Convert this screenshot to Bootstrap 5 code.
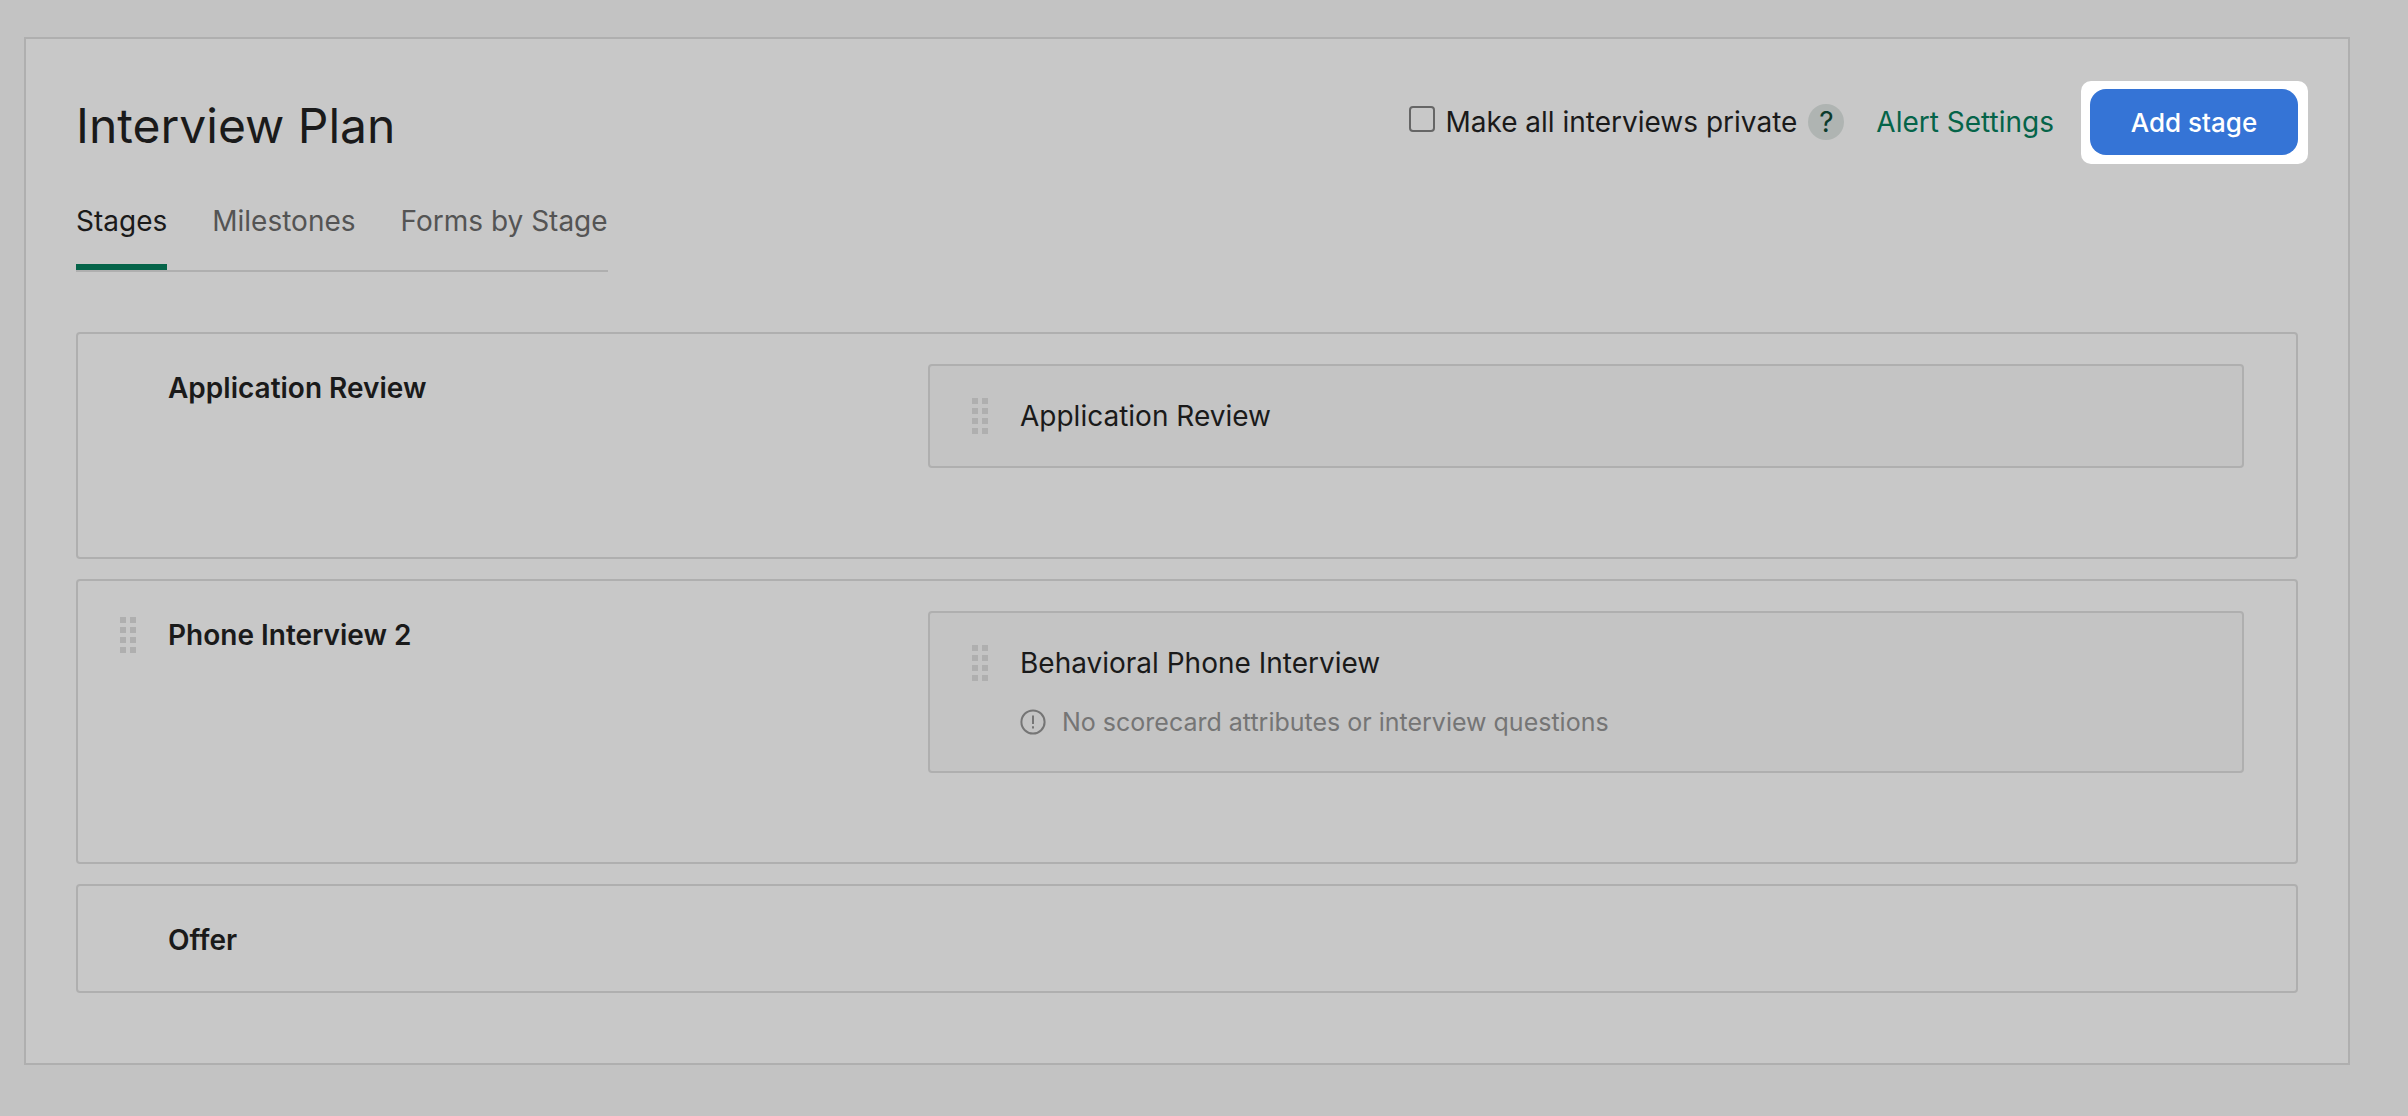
<!DOCTYPE html>
<html lang="en">
<head>
<meta charset="utf-8">
<meta name="viewport" content="width=device-width, initial-scale=1">
<title>Interview Plan</title>
<link href="https://cdn.jsdelivr.net/npm/bootstrap@5.3.0/dist/css/bootstrap.min.css" rel="stylesheet">
<style>
  :root { --line: #afafaf; --ink: #1a1a1a; --green: #056449; }
  body { background: #c3c3c3; color: var(--ink); font: 400 28px/40px Inter, "Liberation Sans", sans-serif; }
  .plan { margin: 37px 58px 0 24px; padding: 50px 50px 70px; background: #c8c8c8; border: 2px solid var(--line); }
  .plan-title { font-size: 48px; line-height: 74px; font-weight: 400; }
  .plan-actions { height: 66px; }
  .form-check-input.private-check { width: 26px; height: 26px; margin: 0 10px 6px 0; border: 2px solid #666; border-radius: 4px; background-color: transparent; }
  .help-btn { width: 36px; height: 36px; margin: 0 32px 0 11px; background: #afb4b2; color: #0c3b2c; font-size: 28px; line-height: 36px; }
  .alert-link-green { color: var(--green); margin-right: 37px; }
  .add-btn { height: 66px; width: 208px; background: #3574d6; color: #fff; border-radius: 16px; font-size: 26px; font-weight: 500; }
  .halo { margin: -8px -10px -9px; padding: 8px 10px 9px 9px; background: #fff; border-radius: 10px; }
  .plan-tabs { gap: 45px; margin: 38px 0 60px; border-bottom: 2px solid var(--line); }
  .plan-tabs .nav-link { padding: 0 0 23px; color: #545454; border-bottom: 6px solid transparent; }
  .plan-tabs .nav-link.active { color: var(--ink); border-color: var(--green); }
  .stage-list { gap: 20px; }
  .stage { display: grid; grid-template-columns: 850fr 1316fr; padding: 30px 52px 89px 0; border: 2px solid var(--line); border-radius: 4px; }
  .stage-bare { padding-bottom: 31px; }
  .stage-name { font-size: 28px; line-height: 40px; font-weight: 600; margin: 0; }
  .stage-head { padding-top: 4px; }
  .grip-slot { flex: 0 0 90px; height: 40px; padding-left: 42px; }
  .grip { display: block; fill: #afafaf; }
  .interview { background: #c4c4c4; border: 2px solid var(--line); border-radius: 4px; padding: 30px 30px 30px 0; }
  .note { margin-top: 20px; gap: 16px; color: #757575; font-size: 25px; line-height: 38px; }
</style>
<script src="https://cdn.jsdelivr.net/npm/bootstrap@5.3.0/dist/js/bootstrap.bundle.min.js"></script>
</head>
<body>
<svg width="0" height="0" class="position-absolute" aria-hidden="true">
  <symbol id="grip" viewBox="0 0 16 36">
    <path d="M0 0h6v6H0zM10 0h6v6h-6zM0 10h6v6H0zM10 10h6v6h-6zM0 20h6v6H0zM10 20h6v6h-6zM0 30h6v6H0zM10 30h6v6h-6z"/>
  </symbol>
</svg>
<main class="plan">
  <header class="d-flex justify-content-between align-items-start">
    <h1 class="plan-title mb-0">Interview Plan</h1>
    <div class="plan-actions d-flex align-items-center">
      <input class="form-check-input private-check" type="checkbox" id="private">
      <label for="private">Make all interviews private</label>
      <button type="button" class="help-btn btn rounded-circle border-0 p-0" aria-label="Help">?</button>
      <a href="#" class="alert-link-green text-decoration-none">Alert Settings</a>
      <div class="halo"><button type="button" class="add-btn btn border-0 p-0 d-block">Add stage</button></div>
    </div>
  </header>

  <nav class="plan-tabs nav d-inline-flex">
    <a class="nav-link active" aria-current="page" href="#">Stages</a>
    <a class="nav-link" href="#">Milestones</a>
    <a class="nav-link" href="#">Forms by Stage</a>
  </nav>

  <div class="stage-list d-flex flex-column">
    <section class="stage">
      <div class="stage-head d-flex"><div class="grip-slot"></div><h2 class="stage-name">Application Review</h2></div>
      <div class="interview d-flex">
        <div class="grip-slot d-flex align-items-center"><svg class="grip" width="16" height="36"><use href="#grip"/></svg></div>
        <div>Application Review</div>
      </div>
    </section>

    <section class="stage">
      <div class="stage-head d-flex">
        <div class="grip-slot d-flex align-items-center"><svg class="grip" width="16" height="36"><use href="#grip"/></svg></div>
        <h2 class="stage-name">Phone Interview 2</h2>
      </div>
      <div class="interview d-flex">
        <div class="grip-slot d-flex align-items-center"><svg class="grip" width="16" height="36"><use href="#grip"/></svg></div>
        <div>
          <div>Behavioral Phone Interview</div>
          <div class="note d-flex align-items-center">
            <svg width="26" height="26" viewBox="0 0 26 26" fill="none" stroke="currentColor" stroke-width="2" aria-hidden="true"><circle cx="13" cy="13" r="11.6"/><path d="M13 6.5v8.5M13 17.2v2.4"/></svg>
            <span>No scorecard attributes or interview questions</span>
          </div>
        </div>
      </div>
    </section>

    <section class="stage stage-bare">
      <div class="stage-head d-flex"><div class="grip-slot"></div><h2 class="stage-name">Offer</h2></div>
    </section>
  </div>
</main>
</body>
</html>
